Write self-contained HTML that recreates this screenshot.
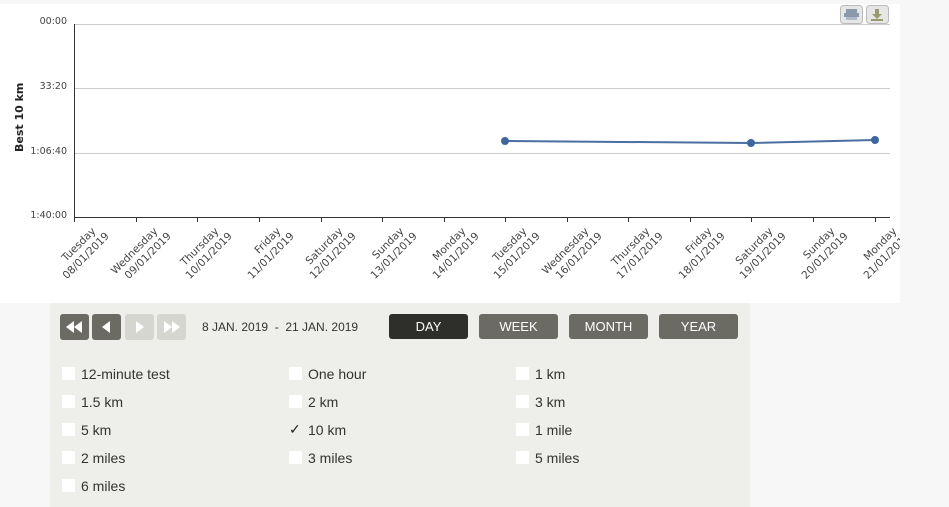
<!DOCTYPE html>
<html><head><style>
body{margin:0;width:949px;height:507px;background:#f7f7f7;position:relative;overflow:hidden;font-family:"Liberation Sans",sans-serif}
#chart{position:absolute;left:0;top:4px;width:900px;height:299px;background:#fff}
#panel{position:absolute;left:50px;top:303px;width:700px;height:204px;background:#eeeeea}
.nb{position:absolute;top:11px;width:29px;height:26px;border-radius:3px;background:#6b6b63}
.nb.dis{background:#d6d6d0}
.pb{position:absolute;top:11px;width:79px;height:25px;border-radius:3px;background:#6b6b63;color:#fff;font-size:13px;text-align:center;line-height:25px}
.cb{position:absolute;width:13px;height:13px;background:#fff}
.lb{position:absolute;font-size:14px;color:#333}
</style></head><body>
<div id="chart">
<svg width="900" height="299" style="position:absolute;left:0;top:0" font-family="DejaVu Sans, sans-serif">
<g stroke="#ccc" stroke-width="1">
<line x1="74" y1="20.5" x2="890" y2="20.5"/><line x1="74" y1="84.5" x2="890" y2="84.5"/><line x1="74" y1="149.5" x2="890" y2="149.5"/>
</g>
<line x1="74.5" y1="20" x2="74.5" y2="214" stroke="#333"/>
<line x1="74" y1="213.5" x2="890" y2="213.5" stroke="#333"/>
<g stroke="#333">
<line x1="74.5" y1="213" x2="74.5" y2="218"/><line x1="136.5" y1="213" x2="136.5" y2="218"/><line x1="197.5" y1="213" x2="197.5" y2="218"/><line x1="259.5" y1="213" x2="259.5" y2="218"/><line x1="321.5" y1="213" x2="321.5" y2="218"/><line x1="382.5" y1="213" x2="382.5" y2="218"/><line x1="444.5" y1="213" x2="444.5" y2="218"/><line x1="505.5" y1="213" x2="505.5" y2="218"/><line x1="567.5" y1="213" x2="567.5" y2="218"/><line x1="628.5" y1="213" x2="628.5" y2="218"/><line x1="690.5" y1="213" x2="690.5" y2="218"/><line x1="751.5" y1="213" x2="751.5" y2="218"/><line x1="813.5" y1="213" x2="813.5" y2="218"/><line x1="875.5" y1="213" x2="875.5" y2="218"/>
</g>
<g font-size="9.5" fill="#444" text-anchor="end">
<text x="67" y="20">00:00</text><text x="67" y="85">33:20</text><text x="67" y="150">1:06:40</text><text x="67" y="214">1:40:00</text>
</g>
<text transform="translate(23,148) rotate(-90)" font-size="11" font-weight="bold" fill="#222">Best 10 km</text>
<polyline points="505,137 751,139 875,136" fill="none" stroke="#4a6fa0" stroke-width="2"/>
<g fill="#3f679e"><circle cx="505" cy="137" r="4"/><circle cx="751" cy="139" r="4"/><circle cx="875" cy="136" r="4"/></g>
<g font-size="10.5" fill="#444" text-anchor="end">
<g transform="translate(104,227) rotate(-45)"><text x="-6" y="-5">Tuesday</text><text x="0" y="8">08/01/2019</text></g>
<g transform="translate(166,227) rotate(-45)"><text x="-6" y="-5">Wednesday</text><text x="0" y="8">09/01/2019</text></g>
<g transform="translate(227,227) rotate(-45)"><text x="-6" y="-5">Thursday</text><text x="0" y="8">10/01/2019</text></g>
<g transform="translate(289,227) rotate(-45)"><text x="-6" y="-5">Friday</text><text x="0" y="8">11/01/2019</text></g>
<g transform="translate(351,227) rotate(-45)"><text x="-6" y="-5">Saturday</text><text x="0" y="8">12/01/2019</text></g>
<g transform="translate(412,227) rotate(-45)"><text x="-6" y="-5">Sunday</text><text x="0" y="8">13/01/2019</text></g>
<g transform="translate(474,227) rotate(-45)"><text x="-6" y="-5">Monday</text><text x="0" y="8">14/01/2019</text></g>
<g transform="translate(535,227) rotate(-45)"><text x="-6" y="-5">Tuesday</text><text x="0" y="8">15/01/2019</text></g>
<g transform="translate(597,227) rotate(-45)"><text x="-6" y="-5">Wednesday</text><text x="0" y="8">16/01/2019</text></g>
<g transform="translate(658,227) rotate(-45)"><text x="-6" y="-5">Thursday</text><text x="0" y="8">17/01/2019</text></g>
<g transform="translate(720,227) rotate(-45)"><text x="-6" y="-5">Friday</text><text x="0" y="8">18/01/2019</text></g>
<g transform="translate(781,227) rotate(-45)"><text x="-6" y="-5">Saturday</text><text x="0" y="8">19/01/2019</text></g>
<g transform="translate(843,227) rotate(-45)"><text x="-6" y="-5">Sunday</text><text x="0" y="8">20/01/2019</text></g>
<g transform="translate(905,227) rotate(-45)"><text x="-6" y="-5">Monday</text><text x="0" y="8">21/01/2019</text></g>
</g>
<rect x="840.5" y="1.5" width="22" height="18" rx="3" fill="#e6e6e6" stroke="#bbb"/>
<rect x="846" y="5" width="11" height="4" fill="#8a9aaa"/><rect x="844" y="9" width="15" height="4" fill="#8a9aaa"/><rect x="846" y="13" width="11" height="3" fill="#b0bac4"/>
<rect x="866.5" y="1.5" width="22" height="18" rx="3" fill="#e6e6e6" stroke="#bbb"/>
<path d="M875 5h4v5h3l-5 5-5-5h3z" fill="#9a9a70"/><rect x="871" y="15" width="12" height="2" fill="#9a9a70"/>
</svg>
</div>
<div id="panel">
<div class="nb" style="left:10px"><svg width="29" height="26"><path d="M6 13l8-6v12zM14 13l8-6v12z" fill="#fff"/></svg></div>
<div class="nb" style="left:42px"><svg width="29" height="26"><path d="M10 13l8-6v12z" fill="#fff"/></svg></div>
<div class="nb dis" style="left:75px"><svg width="29" height="26"><path d="M19 13l-8-6v12z" fill="#fff"/></svg></div>
<div class="nb dis" style="left:107px"><svg width="29" height="26"><path d="M15 13l-8-6v12zM23 13l-8-6v12z" fill="#fff"/></svg></div>
<div style="position:absolute;left:152px;top:17px;font-size:12px;color:#333;white-space:pre">8 JAN. 2019  -  21 JAN. 2019</div>
<div class="pb" style="left:339px;background:#2e2e2a">DAY</div>
<div class="pb" style="left:429px">WEEK</div>
<div class="pb" style="left:519px">MONTH</div>
<div class="pb" style="left:609px">YEAR</div>

<div class="cb" style="left:12px;top:64px"></div><div class="lb" style="left:31px;top:63px">12-minute test</div>
<div class="cb" style="left:12px;top:92px"></div><div class="lb" style="left:31px;top:91px">1.5 km</div>
<div class="cb" style="left:12px;top:120px"></div><div class="lb" style="left:31px;top:119px">5 km</div>
<div class="cb" style="left:12px;top:148px"></div><div class="lb" style="left:31px;top:147px">2 miles</div>
<div class="cb" style="left:12px;top:176px"></div><div class="lb" style="left:31px;top:175px">6 miles</div>

<div class="cb" style="left:239px;top:64px"></div><div class="lb" style="left:258px;top:63px">One hour</div>
<div class="cb" style="left:239px;top:92px"></div><div class="lb" style="left:258px;top:91px">2 km</div>
<div class="cb" style="left:239px;top:120px;background:none;font-size:14px;line-height:13px;color:#222">✓</div><div class="lb" style="left:258px;top:119px">10 km</div>
<div class="cb" style="left:239px;top:148px"></div><div class="lb" style="left:258px;top:147px">3 miles</div>

<div class="cb" style="left:466px;top:64px"></div><div class="lb" style="left:485px;top:63px">1 km</div>
<div class="cb" style="left:466px;top:92px"></div><div class="lb" style="left:485px;top:91px">3 km</div>
<div class="cb" style="left:466px;top:120px"></div><div class="lb" style="left:485px;top:119px">1 mile</div>
<div class="cb" style="left:466px;top:148px"></div><div class="lb" style="left:485px;top:147px">5 miles</div>
</div>
</body></html>
